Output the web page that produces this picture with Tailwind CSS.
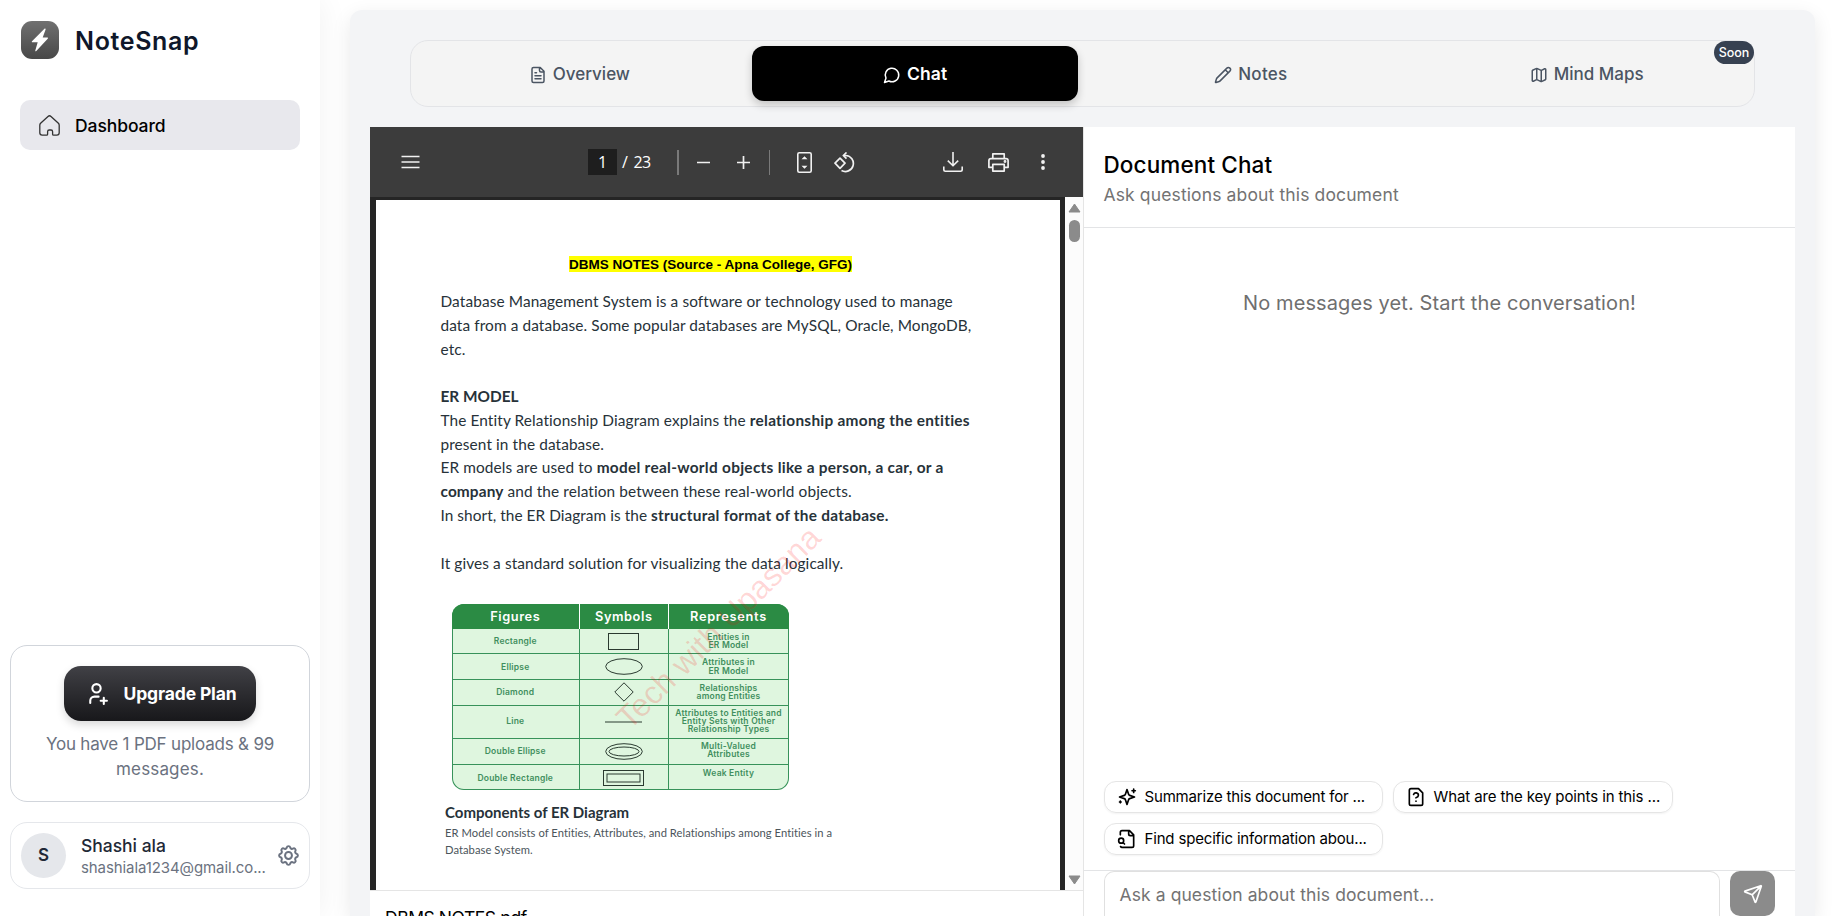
<!DOCTYPE html>
<html lang="en">
<head>
<meta charset="utf-8">
<title>NoteSnap</title>
<script src="https://cdn.jsdelivr.net/npm/@tailwindcss/browser@4"></script>
</head>
<body class="flex h-[916px] w-[1845px] overflow-hidden bg-white font-['Inter','Liberation_Sans',sans-serif] text-[17px]">

<!-- Sidebar -->
<aside class="z-10 flex h-full w-[320px] shrink-0 flex-col bg-white px-[10px] shadow-[0_0_30px_rgba(0,0,0,0.06)]">
  <div class="flex items-center gap-4 pt-[21px] pl-[11px]">
    <div class="flex size-[38px] items-center justify-center rounded-[11px] bg-linear-to-b from-[#707070] to-[#484848]">
      <svg class="h-6 w-[18px]" viewBox="0 0 18 24" fill="#fff"><path d="M13.7 0.6 1 13.2c-.5.6-.2 1.1.5 1.1h5.2L4.3 22.4c-.2.9.5 1.1 1 .5L16.7 10.8c.6-.6.3-1.2-.4-1.2h-4.6l2.9-8.2c.2-.9-.4-1.3-.9-.8z"/></svg>
    </div>
    <span class="pt-[2px] text-[25px] leading-8 font-semibold tracking-[0.650px] text-[#0f172a]">NoteSnap</span>
  </div>
  <nav class="mx-[10px] mt-[41px] flex h-[50px] items-center rounded-[10px] bg-[#e8e8ed] pl-[19px]">
    <svg class="size-[21px]" viewBox="0 0 21 21" fill="none" stroke="#333" stroke-width="1.3" stroke-linejoin="round"><path d="M.8 10.2c0-.8.2-1.300.8-1.900L9 1.400c.9-.8 2.100-.8 3 0l7.400 6.900c.6.6.8 1.100.8 1.900v7.600c0 1.500-.9 2.400-2.400 2.400h-3.200c-.7 0-1-.4-1-1v-2.500c0-1-.6-1.700-1.600-1.700h-1.800c-1 0-1.600.7-1.600 1.700v2.500c0 .6-.4 1-1 1H3.200C1.700 20.200.8 19.300.8 17.800z"/></svg>
    <span class="ml-[15px] pt-[2px] text-[17.500px] font-medium tracking-[-0.080px] text-black">Dashboard</span>
  </nav>

  <div class="mt-auto flex h-[157px] flex-col items-center rounded-[17px] border border-[#d1d5db] pt-5">
    <button class="flex h-[55px] w-[192px] shrink-0 items-center rounded-[17px] bg-linear-to-b from-[#414146] to-[#18181b] pl-5 text-white shadow-[0_4px_8px_rgba(0,0,0,0.15)]">
      <svg class="size-[25px]" viewBox="0 0 24 24" fill="none" stroke="currentColor" stroke-width="2" stroke-linecap="round" stroke-linejoin="round"><path d="M8 7a4 4 0 1 0 8 0a4 4 0 0 0-8 0M16 19h6M19 16v6M6 21v-2a4 4 0 0 1 4-4h4"/></svg>
      <span class="ml-[14.500px] pt-[2px] text-[17.500px] font-bold tracking-[-0.14px]">Upgrade Plan</span>
    </button>
    <p class="mt-[11px] text-center text-[17px] leading-[25px] whitespace-nowrap text-[#6b7280]"><span class="tracking-[-0.2px]">You have 1 PDF uploads &amp; 99</span><br><span class="tracking-[0.16px]">messages.</span></p>
  </div>

  <div class="mt-5 mb-[27px] flex h-[67px] items-center rounded-[17px] border border-[#e5e7eb] pl-[10px]">
    <div class="flex size-[45px] items-center justify-center rounded-full bg-[#e5e7eb] pt-px text-[17px] font-semibold text-[#1f2937]">S</div>
    <div class="ml-[15px] w-[186px] whitespace-nowrap">
      <div class="text-[17.500px] leading-[24px] font-medium tracking-[-0.020px] text-[#1f2937]">Shashi ala</div>
      <div class="text-[15px] leading-[20px] tracking-[-0.09px] text-[#6b7280]">shashiala1234@gmail.co...</div>
    </div>
    <svg class="ml-[8.500px] size-[25px]" viewBox="0 0 24 24" fill="none" stroke="#6b7280" stroke-width="1.900" stroke-linecap="round" stroke-linejoin="round"><path d="M10.325 4.317c.426 -1.756 2.924 -1.756 3.35 0a1.724 1.724 0 0 0 2.573 1.066c1.543 -.94 3.31 .826 2.37 2.37a1.724 1.724 0 0 0 1.065 2.572c1.756 .426 1.756 2.924 0 3.35a1.724 1.724 0 0 0 -1.066 2.573c.94 1.543 -.826 3.31 -2.37 2.37a1.724 1.724 0 0 0 -2.572 1.065c-.426 1.756 -2.924 1.756 -3.35 0a1.724 1.724 0 0 0 -2.573 -1.066c-1.543 .94 -3.31 -.826 -2.37 -2.37a1.724 1.724 0 0 0 -1.065 -2.572c-1.756 -.426 -1.756 -2.924 0 -3.35a1.724 1.724 0 0 0 1.066 -2.573c-.94 -1.543 .826 -3.31 2.37 -2.37c1 .608 2.296 .07 2.572 -1.065z"/><circle cx="12" cy="12" r="3.300"/></svg>
  </div>
</aside>

<!-- Workspace -->
<main class="mt-[10px] ml-[30px] flex h-[906px] w-[1465px] shrink-0 flex-col overflow-hidden rounded-t-xl bg-[#f3f4f6] px-5 pt-[30px] shadow-[0_6px_20px_rgba(0,0,0,0.09)]">
  <div class="mx-10 flex h-[67px] w-[1345px] shrink-0 gap-[10px] rounded-[18px] border border-[#e3e4e7] bg-[#f4f4f4] p-[5px] font-medium text-[#4b5563]">
    <div class="flex h-[55px] flex-1 items-center justify-center gap-[6px] pt-[2px] pl-px">
      <svg class="size-[18px]" viewBox="0 0 24 24" fill="none" stroke="currentColor" stroke-width="2" stroke-linecap="round" stroke-linejoin="round"><path d="M15 2H6a2 2 0 0 0-2 2v16a2 2 0 0 0 2 2h12a2 2 0 0 0 2-2V7ZM14 2v4a2 2 0 0 0 2 2h4M10 9H8M16 13H8M16 17H8"/></svg>
      <span>Overview</span>
    </div>
    <div class="flex h-[55px] flex-1 items-center justify-center gap-[6px] rounded-xl bg-black pt-[2px] pl-px font-semibold text-white shadow-[0_4px_8px_rgba(0,0,0,0.2)]">
      <svg class="size-[18px]" viewBox="0 0 24 24" fill="none" stroke="currentColor" stroke-width="2" stroke-linecap="round" stroke-linejoin="round"><path d="M7.900 20A9 9 0 1 0 4 16.100L2 22Z"/></svg>
      <span class="text-[17.500px] tracking-[0.150px]">Chat</span>
    </div>
    <div class="flex h-[55px] flex-1 items-center justify-center gap-[6px] pt-[2px] pl-px">
      <svg class="size-[18px]" viewBox="0 0 24 24" fill="none" stroke="currentColor" stroke-width="2" stroke-linecap="round" stroke-linejoin="round"><path d="M21.174 6.812a1 1 0 0 0-3.986-3.987L3.842 16.174a2 2 0 0 0-.5.830l-1.321 4.352a.5.5 0 0 0 .623.622l4.353-1.320a2 2 0 0 0 .830-.497zM15 5l4 4"/></svg>
      <span class="tracking-[0.3px]">Notes</span>
    </div>
    <div class="relative flex h-[55px] flex-1 items-center justify-center gap-[6px] pt-[2px] pl-px">
      <svg class="size-[18px]" viewBox="0 0 24 24" fill="none" stroke="currentColor" stroke-width="2" stroke-linecap="round" stroke-linejoin="round"><path d="M14.106 5.553a2 2 0 0 0 1.788 0l3.659-1.830A1 1 0 0 1 21 4.619v12.764a1 1 0 0 1-.553.894l-4.553 2.277a2 2 0 0 1-1.788 0l-4.212-2.106a2 2 0 0 0-1.788 0l-3.659 1.830A1 1 0 0 1 3 19.381V6.618a1 1 0 0 1 .553-.894l4.553-2.277a2 2 0 0 1 1.788 0zM15 5.764v15M9 3.236v15"/></svg>
      <span>Mind Maps</span>
      <span class="absolute -top-[5px] -right-[5px] flex h-[23px] w-10 items-center justify-center rounded-full bg-[#374151] pt-px text-[12.500px] text-white">Soon</span>
    </div>
  </div>

  <div class="mt-5 flex min-h-0 w-[1425px] flex-1 bg-white">
    <!-- PDF viewer -->
    <section class="flex w-[714px] shrink-0 flex-col border-r border-[#e5e5e5]">
      <div class="flex h-[70px] shrink-0 items-center bg-[#3c3c3c] text-[#f1f1f1]">
        <svg class="ml-[31px] h-4 w-[19px]" viewBox="0 0 19 16" fill="none" stroke="currentColor" stroke-width="1.700"><path d="M.5 2.500h18M.5 8h18M.5 13.500h18"/></svg>
        <div class="ml-[168px] flex h-[26px] w-[29px] items-center justify-center bg-[#1e1e1e] font-['Open_Sans',sans-serif] text-[16px] text-white">1</div>
        <span class="w-[60px] pl-[5px] font-['Open_Sans',sans-serif] text-[16px] whitespace-nowrap text-white">/<span class="ml-[5.500px] tracking-[-0.4px]">23</span></span>
        <span class="h-[25px] w-[2px] bg-[#7a7a7a]"></span>
        <svg class="ml-[18px] size-[13px]" viewBox="0 0 13 13" stroke="currentColor" stroke-width="1.700"><path d="M0 6.500h13"/></svg>
        <svg class="ml-[27px] size-[13px]" viewBox="0 0 13 13" stroke="currentColor" stroke-width="1.700"><path d="M0 6.500h13M6.500 0v13"/></svg>
        <span class="ml-[19px] h-[25px] w-px bg-[#7a7a7a]"></span>
        <svg class="ml-[27px] h-[21px] w-[15px]" viewBox="0 0 15 21" fill="none" stroke="currentColor" stroke-width="1.600"><rect x=".8" y=".8" width="13.400" height="19.400" rx="1.500"/><path d="M4.500 7.300 7.500 4.300l3 3zM4.500 13.700l3 3 3-3z" fill="currentColor" stroke="none"/></svg>
        <svg class="ml-[22px] size-[21px]" viewBox="0 0 21 21" fill="none" stroke="currentColor" stroke-width="1.700" stroke-linejoin="round"><path d="M6 6.200 11 11.200 6 16.300 1 11.200zM12.500.5 9.300 3.500l3.200 3.200M9.500 3.500h2.300a8 8 0 1 1-4.300 15"/></svg>
        <svg class="ml-[88px] size-5" viewBox="0 0 20 20" fill="none" stroke="currentColor" stroke-width="1.600" stroke-linejoin="round"><path d="M10 0v13.500M4.800 8.600l5.200 5.200 5.200-5.200M.8 14.500v3c0 1.100.6 1.700 1.700 1.700h15c1.100 0 1.700-.6 1.700-1.700v-3"/></svg>
        <svg class="ml-[25px] h-[19px] w-[21px]" viewBox="0 0 21 19" fill="none" stroke="currentColor" stroke-width="1.700" stroke-linejoin="round"><path d="M4.800 5.500V.9h11.400v4.600M4.800 14.300H.9V7.700c0-1.300.8-2.100 2.100-2.100h15c1.300 0 2.100.8 2.100 2.100v6.600h-3.900M4.800 11.300h11.400v6.800H4.800z"/><circle cx="17" cy="8.500" r=".6" fill="currentColor"/></svg>
        <svg class="ml-[32px] h-4 w-1" viewBox="0 0 4 16" fill="currentColor"><circle cx="2" cy="2" r="1.900"/><circle cx="2" cy="8" r="1.900"/><circle cx="2" cy="14" r="1.900"/></svg>
      </div>

      <div class="flex h-[693px] shrink-0">
        <div class="w-[695px] shrink-0 bg-[#252525] pt-[3px] pl-[6px]">
          <div class="relative h-[690px] w-[684px] overflow-hidden bg-white pl-[64.500px] font-['Lato',sans-serif] text-[15.400px] whitespace-nowrap text-[#273239]">
            <div class="-ml-[64.500px] flex justify-center pt-14"><span class="-ml-[15px] h-4 bg-[#ffff00] font-['Liberation_Sans',sans-serif] text-[13.500px] leading-[17px] font-bold text-black">DBMS NOTES (Source - Apna College, GFG)</span></div>
            <div class="mt-[17px] leading-[24px] tracking-[0.090px]">
              <div class="tracking-[0.110px]">Database Management System is a software or technology used to manage</div>
              <div>data from a database. Some popular databases are MySQL, Oracle, MongoDB,</div>
              <div>etc.</div>
            </div>
            <div class="mt-[24px] leading-[23.800px] tracking-[0.100px]">
              <div><b class="tracking-[0px]">ER MODEL</b></div>
              <div>The Entity Relationship Diagram explains the <b class="tracking-[0.270px]">relationship among the entities</b></div>
              <div>present in the database.</div>
              <div>ER models are used to <b class="tracking-[0.290px]">model real-world objects like a person, a car, or a</b></div>
              <div><b class="tracking-[0.120px]">company</b> and the relation between these real-world objects.</div>
              <div class="tracking-[0.050px]">In short, the ER Diagram is the <b class="tracking-[0.260px]">structural format of the database.</b></div>
              <div>&nbsp;</div>
              <div>It gives a standard solution for visualizing the data logically.</div>
            </div>

            <!-- ER symbols table -->
            <div class="mt-[29px] ml-[11px] grid h-[186px] w-[337px] grid-cols-[128.500px_88.500px_120px] grid-rows-[25px_25px_25.500px_26px_33px_26px_25.500px] overflow-hidden rounded-[12px] bg-[#dff6df] text-center font-['Inter',sans-serif] text-[8.500px] leading-[8.200px] font-semibold tracking-[0.210px] text-[#3f8f5e] shadow-[inset_0_0_0_1px_#37925a]">
              <div class="flex items-center justify-center border-r border-white bg-[#2b8b44] text-[12.800px] tracking-[0.550px] text-white">Figures</div>
              <div class="flex items-center justify-center border-r border-white bg-[#2b8b44] text-[12.800px] tracking-[0.570px] text-white">Symbols</div>
              <div class="flex items-center justify-center bg-[#2b8b44] text-[12.800px] tracking-[0.690px] text-white">Represents</div>

              <div class="flex items-center justify-center border-r border-b border-[#37925a]">Rectangle</div>
              <div class="flex items-center justify-center border-r border-b border-[#37925a]"><svg class="h-[17px] w-[31px]" fill="none" stroke="#2a3a30"><rect x=".5" y=".5" width="30" height="16"/></svg></div>
              <div class="flex items-center justify-center border-b border-[#37925a]">Entities in<br>ER Model</div>

              <div class="flex items-center justify-center border-r border-b border-[#37925a]">Ellipse</div>
              <div class="flex items-center justify-center border-r border-b border-[#37925a]"><svg class="h-[17px] w-[38px]" fill="none" stroke="#2a3a30"><ellipse cx="19" cy="8.500" rx="18.300" ry="7.800"/></svg></div>
              <div class="flex items-center justify-center border-b border-[#37925a]">Attributes in<br>ER Model</div>

              <div class="flex items-center justify-center border-r border-b border-[#37925a]">Diamond</div>
              <div class="flex items-center justify-center border-r border-b border-[#37925a]"><svg class="size-5" fill="none" stroke="#2a3a30"><path d="M10 .8 19.200 10 10 19.200.8 10z"/></svg></div>
              <div class="flex items-center justify-center border-b border-[#37925a]">Relationships<br>among Entities</div>

              <div class="flex items-center justify-center border-r border-b border-[#37925a] pb-[2px]">Line</div>
              <div class="flex items-center justify-center border-r border-b border-[#37925a]"><svg class="h-[2px] w-[37px]" stroke="#2a3a30" stroke-width="1.200"><path d="M0 1h37"/></svg></div>
              <div class="flex items-center justify-center border-b border-[#37925a] pb-px">Attributes to Entities and<br>Entity Sets with Other<br>Relationship Types</div>

              <div class="flex items-center justify-center border-r border-b border-[#37925a]">Double Ellipse</div>
              <div class="flex items-center justify-center border-r border-b border-[#37925a]"><svg class="h-[17px] w-[38px]" fill="none" stroke="#2a3a30"><ellipse cx="19" cy="8.500" rx="18.300" ry="7.800"/><ellipse cx="19" cy="8.500" rx="15" ry="4.500"/></svg></div>
              <div class="flex items-center justify-center border-b border-[#37925a] pb-[2px]">Multi-Valued<br>Attributes</div>

              <div class="flex items-center justify-center border-r border-[#37925a]">Double Rectangle</div>
              <div class="flex items-center justify-center border-r border-[#37925a]"><svg class="h-4 w-[41px]" fill="none" stroke="#2a3a30"><rect x=".5" y=".5" width="40" height="15"/><rect x="4" y="4" width="33" height="8"/></svg></div>
              <div class="flex items-center justify-center pb-[9px]">Weak Entity</div>
            </div>

            <div class="mt-[12px] ml-[4.500px] text-[15px] leading-5 font-bold">Components of ER Diagram</div>
            <div class="mt-[1.500px] ml-[4.500px] text-[11.200px] leading-[17px] tracking-[0.050px] text-[#4b555b]">ER Model consists of Entities, Attributes, and Relationships among Entities in a<br>Database System.</div>

            <svg class="absolute inset-0 h-full w-full" viewBox="376 200 684 690"><text transform="translate(629.500 731) rotate(-44.700)" font-family="Liberation Sans" font-size="32.200" fill="#ff0000" fill-opacity=".16">Tech with Upasana</text></svg>
          </div>
        </div>
        <!-- Scrollbar -->
        <div class="flex w-[18px] shrink-0 flex-col items-center bg-[#fcfcfc] pt-[6px] pb-[5px]">
          <svg class="h-[10px] w-[13px]" viewBox="0 0 13 10" fill="#8b8b8b" stroke="#8b8b8b" stroke-linejoin="round"><path d="M6.500 1 12 9H1z"/></svg>
          <div class="mt-[7px] h-[22px] w-[11px] rounded-full bg-[#8b8b8b]"></div>
          <svg class="mt-auto h-[10px] w-[13px]" viewBox="0 0 13 10" fill="#8b8b8b" stroke="#8b8b8b" stroke-linejoin="round"><path d="M6.500 9 12 1H1z"/></svg>
        </div>
      </div>
      <div class="border-t border-[#e5e5e5] pt-[13px] pl-[15px] text-[17.500px] leading-7 tracking-[-0.450px] text-black">DBMS NOTES.pdf</div>
    </section>

    <!-- Chat -->
    <section class="flex flex-1 flex-col">
      <header class="h-[101px] shrink-0 border-b border-[#e3e4e6] pt-6 pl-[19.500px]">
        <h2 class="text-[22.500px] leading-7 font-medium tracking-[0.120px] text-black">Document Chat</h2>
        <p class="mt-1 text-[17.500px] leading-6 tracking-[0.130px] text-[#737373]">Ask questions about this document</p>
      </header>
      <div class="h-[553px] shrink-0 pt-[61px] text-center text-[20px] leading-7 tracking-[0.100px] text-[#6f6f6f]">No messages yet. Start the conversation!</div>
      <div class="flex h-[90px] shrink-0 flex-wrap content-start gap-x-[10px] gap-y-[10px] border-b border-[#e3e4e6] pl-5 text-[15px] whitespace-nowrap text-black">
        <div class="flex h-8 w-[279px] items-center gap-[7.500px] rounded-[12px] border border-[#e5e5e5] pl-3 shadow-xs">
          <svg class="size-5" viewBox="0 0 24 24" fill="none" stroke="currentColor" stroke-width="2" stroke-linecap="round" stroke-linejoin="round"><path d="m12 3-1.900 5.800a2 2 0 0 1-1.287 1.288L3 12l5.800 1.900a2 2 0 0 1 1.288 1.287L12 21l1.900-5.800a2 2 0 0 1 1.287-1.288L21 12l-5.800-1.900a2 2 0 0 1-1.288-1.287ZM20 2.500v4M22 4.500h-4M4 17v2M5 18H3"/></svg>
          <span class="tracking-[-0.170px]">Summarize this document for ...</span>
        </div>
        <div class="flex h-8 w-[280px] items-center gap-[7.500px] rounded-[12px] border border-[#e5e5e5] pl-3 shadow-xs">
          <svg class="size-5" viewBox="0 0 24 24" fill="none" stroke="currentColor" stroke-width="2" stroke-linecap="round" stroke-linejoin="round"><path d="M15 2H6a2 2 0 0 0-2 2v16a2 2 0 0 0 2 2h12a2 2 0 0 0 2-2V7ZM12 17h.01M9.100 9a3 3 0 0 1 5.820 1c0 2-3 3-3 3"/></svg>
          <span class="tracking-[-0.110px]">What are the key points in this ...</span>
        </div>
        <div class="flex h-8 w-[279px] items-center gap-[7.500px] rounded-[12px] border border-[#e5e5e5] pl-3 shadow-xs">
          <svg class="size-5" viewBox="0 0 24 24" fill="none" stroke="currentColor" stroke-width="2" stroke-linecap="round" stroke-linejoin="round"><path d="M14 2v4a2 2 0 0 0 2 2h4M4.268 21a2 2 0 0 0 1.727 1H18a2 2 0 0 0 2-2V7l-5-5H6a2 2 0 0 0-2 2v3M9 18l-1.500-1.500"/><circle cx="5" cy="14" r="3"/></svg>
          <span class="tracking-[-0.170px]">Find specific information abou...</span>
        </div>
      </div>
      <div class="flex min-h-0 flex-1 gap-[10px] pl-5">
        <div class="h-full w-[616px] rounded-t-[10px] border border-b-0 border-[#e0e0e0] pt-[11px] pl-[14.500px] text-[17.500px] leading-6 tracking-[0.090px] text-[#737373]">Ask a question about this document...</div>
        <button class="flex h-[45px] w-[45px] items-center justify-center rounded-[10px] bg-[#8b8b8b] text-white">
          <svg class="size-5" viewBox="0 0 24 24" fill="none" stroke="currentColor" stroke-width="2" stroke-linecap="round" stroke-linejoin="round"><path d="M14.536 21.686a.5.5 0 0 0 .937-.024l6.500-19a.496.496 0 0 0-.635-.635l-19 6.500a.5.5 0 0 0-.024.937l7.930 3.180a2 2 0 0 1 1.112 1.110zM21.854 2.147l-10.940 10.939"/></svg>
        </button>
      </div>
    </section>
  </div>
</main>
</body>
</html>
